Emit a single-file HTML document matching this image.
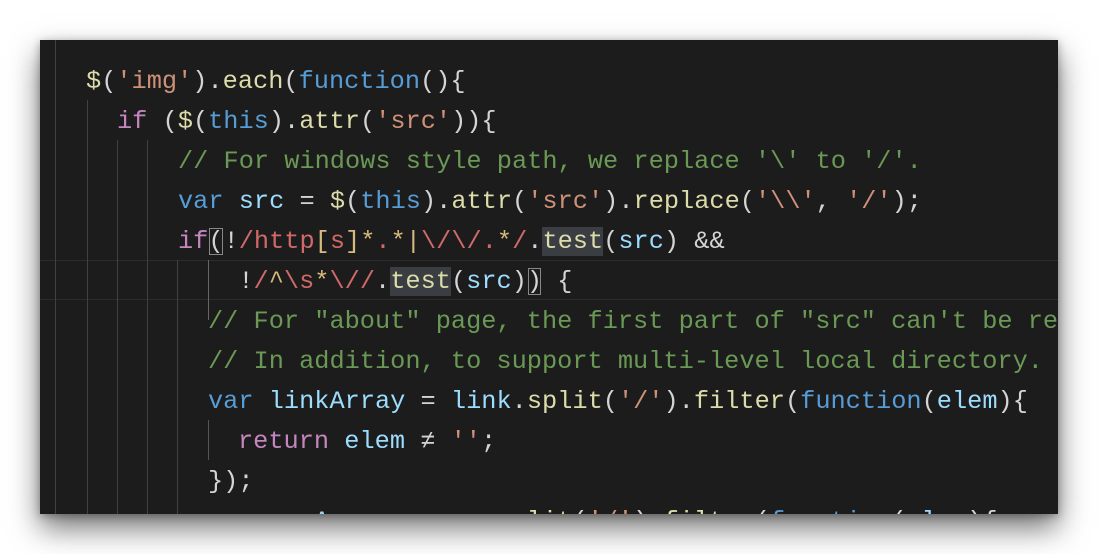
<!DOCTYPE html>
<html><head><style>
html,body{margin:0;padding:0;background:#fff;width:1098px;height:554px;overflow:hidden}
#p{position:absolute;left:40px;top:40px;width:1018px;height:474px;background:#1c1c1c;overflow:hidden;box-shadow:0 14px 28px rgba(0,0,0,.55),0 2px 8px rgba(0,0,0,.3)}
.l{position:absolute;left:0;height:40px;line-height:40px;white-space:pre;font-family:"Liberation Mono","DejaVu Sans Mono",monospace;font-size:25.3px;color:#d4d4d4;margin-top:2px}
.g{position:absolute;width:1px;background:#404040}
.k{color:#569cd6}.p{color:#c586c0}.f{color:#dcdcaa}.s{color:#ce9178}.v{color:#9cdcfe}.c{color:#6a9955}.r{color:#d16969}.q{color:#d7ba7d}
.h{background:#3a3d41}
.b{outline:1.5px solid #888;outline-offset:-2px}
</style></head><body>
<div id="p">
<div style="position:absolute;left:0;top:220px;width:1018px;height:40px;border-top:1.5px solid #2c2c2c;border-bottom:1.5px solid #2c2c2c;box-sizing:border-box"></div>
<div class="g" style="left:15px;top:0;height:474px"></div>
<div class="g" style="left:47px;top:60px;height:414px"></div>
<div class="g" style="left:77px;top:100px;height:374px"></div>
<div class="g" style="left:107px;top:100px;height:374px"></div>
<div class="g" style="left:137px;top:220px;height:254px"></div>
<div class="g" style="left:168px;top:220px;height:60px;background:#666"></div>
<div class="g" style="left:168px;top:380px;height:40px;background:#555"></div>
<div class="l" style="top:20px;left:46px"><span class="f">$</span>(<span class="s">'img'</span>).<span class="f">each</span>(<span class="k">function</span>(){</div>
<div class="l" style="top:60px;left:77px"><span class="p">if</span> (<span class="f">$</span>(<span class="k">this</span>).<span class="f">attr</span>(<span class="s">'src'</span>)){</div>
<div class="l" style="top:100px;left:138px"><span class="c">// For windows style path, we replace '\' to '/'.</span></div>
<div class="l" style="top:140px;left:138px"><span class="k">var</span> <span class="v">src</span> = <span class="f">$</span>(<span class="k">this</span>).<span class="f">attr</span>(<span class="s">'src'</span>).<span class="f">replace</span>(<span class="s">'\\'</span>, <span class="s">'/'</span>);</div>
<div class="l" style="top:180px;left:138px"><span class="p">if</span><span class="b">(</span>!<span class="r">/http</span><span class="q">[</span><span class="r">s</span><span class="q">]*</span><span class="r">.</span><span class="q">*|</span><span class="r">\/\/.</span><span class="q">*</span><span class="r">/</span>.<span class="f h">test</span>(<span class="v">src</span>) &amp;&amp;</div>
<div class="l" style="top:220px;left:168px">  !<span class="r">/</span><span class="q">^</span><span class="r">\s</span><span class="q">*</span><span class="r">\//</span>.<span class="f h">test</span>(<span class="v">src</span>)<span class="b">)</span> {</div>
<div class="l" style="top:260px;left:168px"><span class="c">// For "about" page, the first part of "src" can't be re</span></div>
<div class="l" style="top:300px;left:168px"><span class="c">// In addition, to support multi-level local directory.</span></div>
<div class="l" style="top:340px;left:168px"><span class="k">var</span> <span class="v">linkArray</span> = <span class="v">link</span>.<span class="f">split</span>(<span class="s">'/'</span>).<span class="f">filter</span>(<span class="k">function</span>(<span class="v">elem</span>){</div>
<div class="l" style="top:380px;left:198px"><span class="p">return</span> <span class="v">elem</span> ≠ <span class="s">''</span>;</div>
<div class="l" style="top:420px;left:168px">});</div>
<div class="l" style="top:460px;left:168px"><span class="k">var</span> <span class="v">srcArray</span> = <span class="v">src</span>.<span class="f">split</span>(<span class="s">'/'</span>).<span class="f">filter</span>(<span class="k">function</span>(<span class="v">elem</span>){</div>
</div>
</body></html>
